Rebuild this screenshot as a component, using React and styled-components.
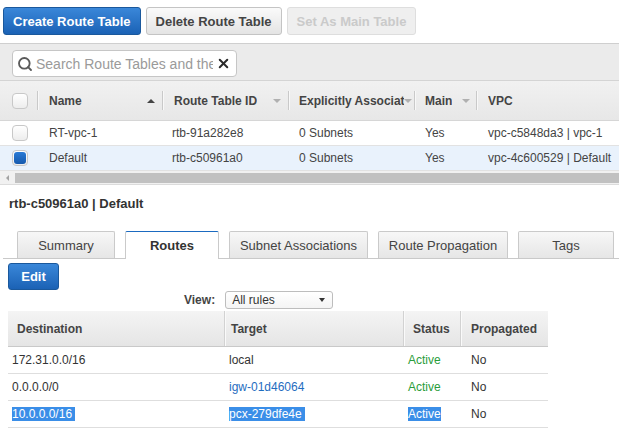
import React from 'react';
import styled, { createGlobalStyle, css } from 'styled-components';
import { Search, X } from 'lucide-react';

const FONT = `"Liberation Sans", Arial, Helvetica, sans-serif`;

const GlobalStyle = createGlobalStyle`
  body {
    margin: 0;
    background: #fff;
    font-family: ${FONT};
    color: #444;
    overflow: hidden;
  }
`;

const Page = styled.div`
  width: 619px;
  height: 445px;
  overflow: hidden;
`;

const Toolbar = styled.div`
  display: flex;
  gap: 5px;
  padding: 7px 3px 0;
  height: 44px;
  box-sizing: border-box;
  border-bottom: 1px solid #cfcfcf;
`;

const Button = styled.button`
  height: 28px;
  padding: 0 9px;
  border-radius: 3px;
  font: bold 13px ${FONT};
  white-space: nowrap;
  cursor: pointer;
  ${p => p.$variant === 'primary' && css`
    color: #fff;
    background: linear-gradient(#3a87d9, #1b62b5);
    border: 1px solid #1a589c;
  `}
  ${p => p.$variant === 'default' && css`
    color: #444;
    background: linear-gradient(#fafafa, #e4e4e4);
    border: 1px solid #c4c4c4;
  `}
  ${p => p.$variant === 'disabled' && css`
    color: #cacaca;
    background: #efefef;
    border: 1px solid #dedede;
    cursor: default;
  `}
`;

const FilterBar = styled.div`
  height: 37px;
  box-sizing: border-box;
  background: #ebebeb;
  padding: 6px 12px 0;
  border-bottom: 1px solid #d4d4d4;
`;

const SearchBox = styled.div`
  width: 225px;
  height: 27px;
  box-sizing: border-box;
  border: 1px solid #c6c6c6;
  border-radius: 4px;
  background: #fff;
  display: flex;
  align-items: center;
  padding: 0 5px 0 4px;
  gap: 3px;
  color: #555;
`;

const Placeholder = styled.span`
  flex: 1;
  min-width: 0;
  overflow: hidden;
  white-space: nowrap;
  font-size: 14px;
  color: #9a9a9a;
`;

const Grid = styled.div`
  display: grid;
  grid-template-columns: 38px 125px 126px 126px 62px 1fr;
`;

const HeadRow = styled(Grid)`
  height: 40px;
  background: linear-gradient(#f1f1f1, #e7e7e7);
  border-bottom: 1px solid #d6d6d6;
  box-sizing: border-box;
`;

const HeadCell = styled.div`
  display: flex;
  align-items: center;
  padding-left: ${p => p.$pad ?? 11}px;
  font-weight: bold;
  font-size: 12px;
  color: #444;
  min-width: 0;
`;

const HeadLabel = styled.span`
  white-space: nowrap;
  overflow: hidden;
  min-width: 0;
  max-width: ${p => (p.$max ? `${p.$max}px` : 'none')};
`;

const SortArrow = styled.span`
  margin-left: auto;
  margin-right: ${p => p.$gap}px;
  flex: none;
  width: 0;
  height: 0;
  border-left: 4px solid transparent;
  border-right: 4px solid transparent;
  ${p => p.$up
    ? css`border-bottom: 4px solid #444;`
    : css`border-top: 4px solid #b0b0b0;`}
`;

const Sep = styled.span`
  flex: none;
  margin-left: ${p => (p.$auto ? 'auto' : '0')};
  width: 1px;
  height: 19px;
  background: #c9c9c9;
  box-shadow: 1px 0 0 #f8f8f8;
`;

const Row = styled(Grid)`
  height: 25px;
  background: ${p => (p.$selected ? '#e9f2fc' : '#fff')};
  border-bottom: 1px solid #e2e2e2;
  box-sizing: border-box;
`;

const Cell = styled.div`
  display: flex;
  align-items: center;
  padding-left: ${p => p.$pad ?? 11}px;
  font-size: 12px;
  color: #444;
  white-space: nowrap;
  overflow: hidden;
`;

const Check = styled.span`
  width: 16px;
  height: 16px;
  box-sizing: border-box;
  border: 1px solid #c8c8c8;
  border-radius: 4px;
  background: linear-gradient(#fff, #ededed);
  display: flex;
  align-items: center;
  justify-content: center;
  &::after {
    content: '';
    display: ${p => (p.$checked ? 'block' : 'none')};
    width: 12px;
    height: 12px;
    border-radius: 3px;
    background: linear-gradient(#2b7bd6, #1559ad);
  }
`;

const ScrollBar = styled.div`
  height: 14px;
  display: flex;
  align-items: center;
  background: #f1f1f1;
  border-bottom: 1px solid #dcdcdc;
  box-sizing: border-box;
`;

const ScrollArrow = styled.span`
  width: 15px;
  display: flex;
  justify-content: center;
  &::before {
    content: '';
    border-top: 3px solid transparent;
    border-bottom: 3px solid transparent;
    border-right: 3px solid #a3a3a3;
  }
`;

const Thumb = styled.span`
  flex: 1;
  height: 10px;
  background: #c1c1c1;
`;

const Title = styled.div`
  padding: 11px 9px 0;
  font-weight: bold;
  font-size: 13px;
  line-height: 16px;
  color: #333;
`;

const TabBar = styled.div`
  display: flex;
  gap: 10px;
  margin: 19px 0 0 3px;
  padding-left: 14px;
  height: 28px;
  box-sizing: border-box;
  border-bottom: 1px solid #c9c9c9;
  align-items: flex-end;
`;

const Tab = styled.div`
  width: ${p => p.$w}px;
  height: 27px;
  box-sizing: border-box;
  display: flex;
  align-items: center;
  justify-content: center;
  font-size: 13px;
  color: #444;
  border: 1px solid #cacaca;
  border-bottom: none;
  border-radius: 2px 2px 0 0;
  background: linear-gradient(#f7f7f7, #e6e6e6);
  ${p => p.$active && css`
    height: 28px;
    margin-bottom: -1px;
    background: #fff;
    border-top: 1px solid #1b6ac0;
    font-weight: bold;
    color: #333;
  `}
`;

const EditButton = styled(Button)`
  margin: 4px 0 0 8px;
  width: 51px;
  height: 27px;
  padding: 0;
`;

const ViewRow = styled.div`
  display: flex;
  align-items: center;
  gap: 10px;
  padding-left: 184px;
  height: 19px;
`;

const ViewLabel = styled.span`
  font-weight: bold;
  font-size: 12px;
  color: #444;
`;

const Select = styled.div`
  width: 108px;
  height: 18px;
  box-sizing: border-box;
  border: 1px solid #bdbdbd;
  border-radius: 3px;
  background: linear-gradient(#fff, #f4f4f4);
  display: flex;
  align-items: center;
  padding: 0 7px 0 6px;
  font-size: 12px;
  color: #333;
  &::after {
    content: '';
    margin-left: auto;
    border-left: 3px solid transparent;
    border-right: 3px solid transparent;
    border-top: 4px solid #333;
  }
`;

const RouteGrid = styled.div`
  display: grid;
  grid-template-columns: 216px 179px 57px 88px;
  width: 540px;
`;

const RouteTable = styled.div`
  margin: 2px 0 0 8px;
  width: 540px;
`;

const RouteHead = styled(RouteGrid)`
  height: 36px;
  background: linear-gradient(#f4f4f4, #e5e5e5);
  border-bottom: 1px solid #c9c9c9;
  box-sizing: border-box;
`;

const RouteHeadCell = styled.div`
  display: flex;
  align-items: center;
  padding-left: ${p => p.$pad ?? 9}px;
  font-weight: bold;
  font-size: 12px;
  color: #444;
  border-left: ${p => (p.$first ? 'none' : '1px solid #d2d2d2')};
  box-shadow: ${p => (p.$first ? 'none' : 'inset 1px 0 0 #fafafa')};
`;

const RouteRow = styled(RouteGrid)`
  height: 27px;
  border-bottom: 1px solid #dedede;
  box-sizing: border-box;
`;

const RouteCell = styled.div`
  display: flex;
  align-items: center;
  padding-left: ${p => p.$pad}px;
  font-size: 12px;
  color: ${p => (p.$tone === 'link' ? '#1f6dbf' : p.$tone === 'ok' ? '#2a9d3a' : '#333')};
  white-space: pre;
`;

const Selected = styled.span`
  background: #3a8ee8;
  color: #fff;
`;

const tables = [
  { name: 'RT-vpc-1', id: 'rtb-91a282e8', assoc: '0 Subnets', main: 'Yes', vpc: 'vpc-c5848da3 | vpc-1' },
  { name: 'Default', id: 'rtb-c50961a0', assoc: '0 Subnets', main: 'Yes', vpc: 'vpc-4c600529 | Default', selected: true },
];

const tabs = [
  { label: 'Summary', w: 98 },
  { label: 'Routes', w: 94, active: true },
  { label: 'Subnet Associations', w: 139 },
  { label: 'Route Propagation', w: 130 },
  { label: 'Tags', w: 96 },
];

const routes = [
  { dest: '172.31.0.0/16', target: 'local', targetTone: 'plain' },
  { dest: '0.0.0.0/0', target: 'igw-01d46064', targetTone: 'link' },
  { dest: '10.0.0.0/16', target: 'pcx-279dfe4e', targetTone: 'link', highlight: true },
];

const App = () => {
  return (
    <Page>
      <GlobalStyle />
      <Toolbar>
        <Button $variant="primary">Create Route Table</Button>
        <Button $variant="default">Delete Route Table</Button>
        <Button $variant="disabled">Set As Main Table</Button>
      </Toolbar>

      <FilterBar>
        <SearchBox>
          <Search size={16} strokeWidth={2.8} color="#5a5a5a" />
          <Placeholder>Search Route Tables and their properties</Placeholder>
          <X size={15} strokeWidth={3.2} color="#2a2a2a" />
        </SearchBox>
      </FilterBar>

      <HeadRow>
        <HeadCell $pad={12}><Check /><Sep $auto /></HeadCell>
        <HeadCell><HeadLabel>Name</HeadLabel><SortArrow $up $gap={7} /><Sep /></HeadCell>
        <HeadCell><HeadLabel>Route Table ID</HeadLabel><SortArrow $gap={7} /><Sep /></HeadCell>
        <HeadCell $pad={10}><HeadLabel $max={106}>Explicitly Associated With</HeadLabel><SortArrow $gap={2} /><Sep /></HeadCell>
        <HeadCell $pad={10}><HeadLabel>Main</HeadLabel><SortArrow $gap={6} /><Sep /></HeadCell>
        <HeadCell><HeadLabel>VPC</HeadLabel></HeadCell>
      </HeadRow>

      {tables.map(t => (
        <Row key={t.id} $selected={t.selected}>
          <Cell $pad={12}><Check $checked={t.selected} /></Cell>
          <Cell>{t.name}</Cell>
          <Cell $pad={9}>{t.id}</Cell>
          <Cell $pad={10}>{t.assoc}</Cell>
          <Cell $pad={10}>{t.main}</Cell>
          <Cell>{t.vpc}</Cell>
        </Row>
      ))}

      <ScrollBar>
        <ScrollArrow />
        <Thumb />
      </ScrollBar>

      <Title>rtb-c50961a0 | Default</Title>

      <TabBar>
        {tabs.map(t => (
          <Tab key={t.label} $w={t.w} $active={t.active}>{t.label}</Tab>
        ))}
      </TabBar>

      <EditButton $variant="primary">Edit</EditButton>

      <ViewRow>
        <ViewLabel>View:</ViewLabel>
        <Select>All rules</Select>
      </ViewRow>

      <RouteTable>
        <RouteHead>
          <RouteHeadCell $first>Destination</RouteHeadCell>
          <RouteHeadCell $pad={6}>Target</RouteHeadCell>
          <RouteHeadCell>Status</RouteHeadCell>
          <RouteHeadCell $pad={10}>Propagated</RouteHeadCell>
        </RouteHead>
        {routes.map(r => (
          <RouteRow key={r.dest}>
            <RouteCell $pad={4}>{r.highlight ? <Selected>{r.dest + ' '}</Selected> : r.dest}</RouteCell>
            <RouteCell $pad={5} $tone={r.highlight ? 'plain' : r.targetTone}>
              {r.highlight ? <Selected>{r.target + ' '}</Selected> : r.target}
            </RouteCell>
            <RouteCell $pad={5} $tone={r.highlight ? 'plain' : 'ok'}>
              {r.highlight ? <Selected>Active</Selected> : 'Active'}
            </RouteCell>
            <RouteCell $pad={11}>No</RouteCell>
          </RouteRow>
        ))}
      </RouteTable>
    </Page>
  );
};

export default App;
